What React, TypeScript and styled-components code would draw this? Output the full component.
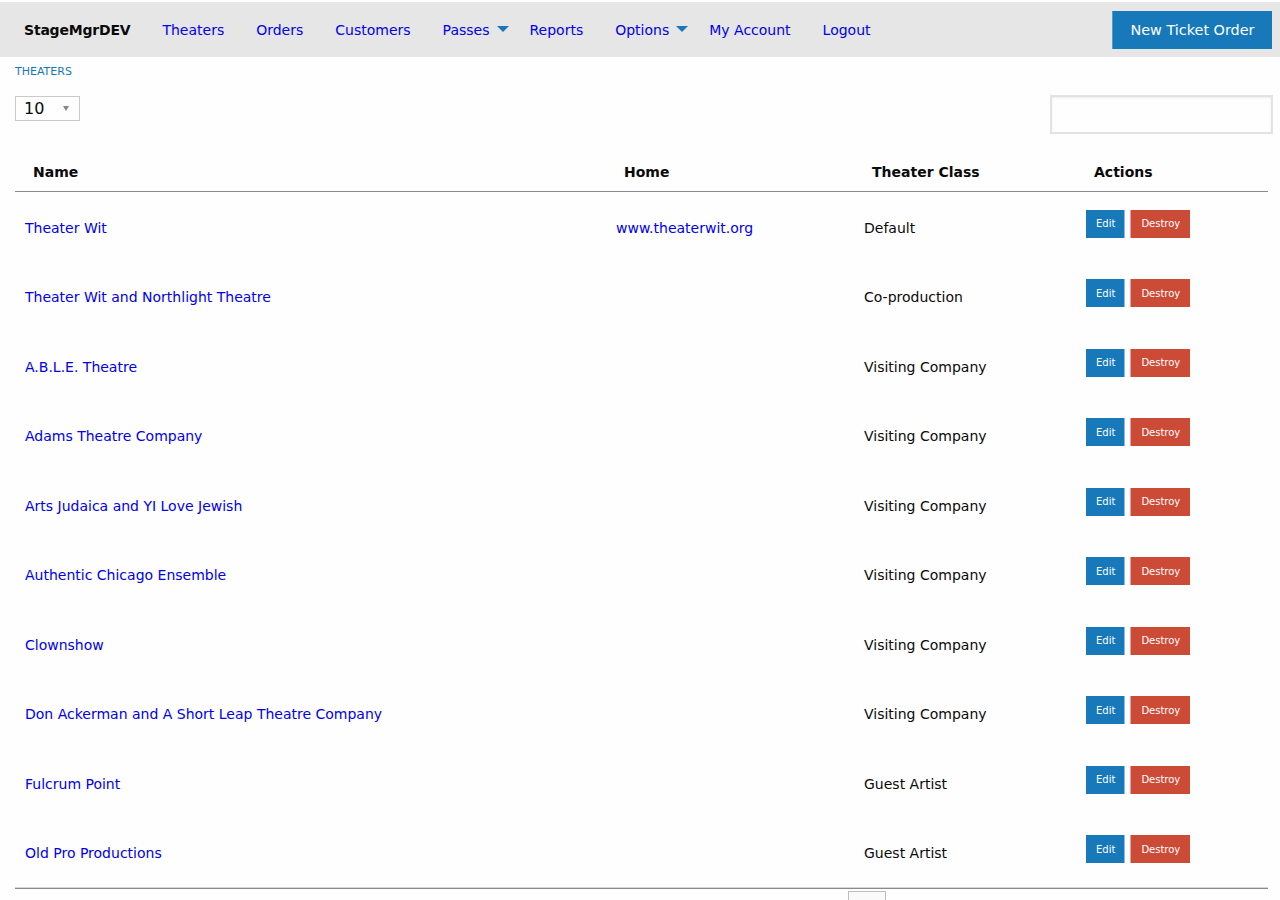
import React from 'react';
import styled, { createGlobalStyle } from 'styled-components';

const GlobalStyle = createGlobalStyle`
  html, body {
    margin: 0;
    padding: 0;
    background: #fefefe;
    font-family: "DejaVu Sans", Verdana, sans-serif;
    font-size: 14px;
    color: #0a0a0a;
  }
  * { box-sizing: border-box; }
`;

const theaters = [
  { name: 'Theater Wit', home: 'www.theaterwit.org', klass: 'Default' },
  { name: 'Theater Wit and Northlight Theatre', home: '', klass: 'Co-production' },
  { name: 'A.B.L.E. Theatre', home: '', klass: 'Visiting Company' },
  { name: 'Adams Theatre Company', home: '', klass: 'Visiting Company' },
  { name: 'Arts Judaica and YI Love Jewish', home: '', klass: 'Visiting Company' },
  { name: 'Authentic Chicago Ensemble', home: '', klass: 'Visiting Company' },
  { name: 'Clownshow', home: '', klass: 'Visiting Company' },
  { name: 'Don Ackerman and A Short Leap Theatre Company', home: '', klass: 'Visiting Company' },
  { name: 'Fulcrum Point', home: '', klass: 'Guest Artist' },
  { name: 'Old Pro Productions', home: '', klass: 'Guest Artist' },
];

const navItems = [
  { label: 'Theaters' },
  { label: 'Orders' },
  { label: 'Customers' },
  { label: 'Passes', dropdown: true },
  { label: 'Reports' },
  { label: 'Options', dropdown: true },
  { label: 'My Account' },
  { label: 'Logout' },
];

const App: React.FC = () => (
  <>
    <GlobalStyle />
    <SPage>
      <STopBar>
        <SMenu>
          <SBrand>StageMgrDEV</SBrand>
          {navItems.map((item) => (
            <SNavLink key={item.label} href="#" $dropdown={item.dropdown}>
              {item.label}
            </SNavLink>
          ))}
        </SMenu>
        <SPrimaryButton>New Ticket Order</SPrimaryButton>
      </STopBar>

      <SContent>
        <SBreadcrumb href="#">THEATERS</SBreadcrumb>

        <SControls>
          <SLengthSelect>
            <span>10</span>
            <SSelectArrow />
          </SLengthSelect>
          <SSearch type="text" />
        </SControls>

        <STable>
          <SHeadRow>
            <SHeadCell>Name</SHeadCell>
            <SHeadCell>Home</SHeadCell>
            <SHeadCell>Theater Class</SHeadCell>
            <SHeadCell>Actions</SHeadCell>
          </SHeadRow>
          {theaters.map((t) => (
            <SRow key={t.name}>
              <SCell><SLink href="#">{t.name}</SLink></SCell>
              <SCell>{t.home && <SLink href="#">{t.home}</SLink>}</SCell>
              <SCell>{t.klass}</SCell>
              <SCell>
                <SActions>
                  <STinyButton $variant="primary">Edit</STinyButton>
                  <STinyButton $variant="alert">Destroy</STinyButton>
                </SActions>
              </SCell>
            </SRow>
          ))}
        </STable>
        <SFooter>
          <SPagerBox />
        </SFooter>
      </SContent>
    </SPage>
  </>
);

const SPage = styled.div`
  padding-top: 2px;
`;

const STopBar = styled.div`
  display: flex;
  align-items: center;
  justify-content: space-between;
  height: 55px;
  padding: 8px;
  background-color: #e6e6e6;
`;

const SMenu = styled.nav`
  display: flex;
  align-items: center;
`;

const SBrand = styled.span`
  padding: 0 16px;
  font-weight: bold;
  font-size: 14px;
  letter-spacing: -0.2px;
  color: #0a0a0a;
`;

const SNavLink = styled.a<{ $dropdown?: boolean }>`
  position: relative;
  display: block;
  padding: 10px 16px;
  padding-right: ${(p) => (p.$dropdown ? '24px' : '16px')};
  font-size: 14px;
  line-height: 1;
  color: #0000ee;
  text-decoration: none;
  &::after {
    content: '';
    display: ${(p) => (p.$dropdown ? 'block' : 'none')};
    position: absolute;
    right: 5px;
    top: 50%;
    margin-top: -4px;
    border-style: solid;
    border-width: 6px 6px 0;
    border-color: #1779ba transparent transparent;
  }
`;

const SPrimaryButton = styled.button`
  height: 38px;
  padding: 0 17.5px;
  border: none;
  border-left: 1px solid #4f9ccf;
  background-color: #1779ba;
  color: #fefefe;
  font-family: "DejaVu Sans", Verdana, sans-serif;
  font-size: 14.4px;
  cursor: pointer;
`;

const SContent = styled.main`
  padding: 0 7px 0 15px;
`;

const SBreadcrumb = styled.a`
  display: block;
  margin-top: 8px;
  height: 14px;
  line-height: 14px;
  font-size: 11px;
  color: #1779ba;
  text-decoration: none;
`;

const SControls = styled.div`
  display: flex;
  justify-content: space-between;
  align-items: flex-start;
  margin-top: 16px;
  height: 39px;
`;

const SLengthSelect = styled.div`
  display: flex;
  align-items: center;
  justify-content: space-between;
  width: 65px;
  height: 25px;
  margin-top: 1px;
  padding: 0 10px 0 8px;
  border: 1px solid #cacaca;
  background: #fefefe;
  font-size: 16px;
  color: #0a0a0a;
`;

const SSelectArrow = styled.span`
  border-style: solid;
  border-width: 5px 3.5px 0;
  border-color: #888 transparent transparent;
`;

const SSearch = styled.input`
  width: 223px;
  height: 39px;
  border: 2px solid #e3e3e3;
  box-shadow: inset 0 1px 2px rgba(10, 10, 10, 0.08);
  background: #fefefe;
  outline: none;
`;

const STable = styled.div`
  display: grid;
  grid-template-columns: 591px 248px 222px 1fr;
  margin-top: 17px;
  margin-right: 5px;
`;

const SHeadRow = styled.div`
  display: contents;
`;

const SHeadCell = styled.div`
  display: flex;
  align-items: center;
  height: 41px;
  padding-left: 18px;
  padding-top: 1px;
  border-bottom: 1px solid #8a8a8a;
  font-weight: bold;
  font-size: 14px;
  color: #0a0a0a;
`;

const SRow = styled.div`
  display: contents;
`;

const SCell = styled.div`
  display: flex;
  align-items: center;
  height: 69.5px;
  padding-left: 10px;
  padding-top: 2px;
  font-size: 14px;
  color: #0a0a0a;
`;

const SLink = styled.a`
  color: #0000ee;
  text-decoration: none;
`;

const SActions = styled.div`
  display: flex;
  gap: 5px;
  margin-bottom: 8px;
`;

const STinyButton = styled.button<{ $variant: 'primary' | 'alert' }>`
  height: 28px;
  padding: ${(p) => (p.$variant === 'primary' ? '0 9px 0 10px' : '0 10px')};
  border: none;
  border-right: ${(p) => (p.$variant === 'primary' ? '1px solid #8bbde0' : 'none')};
  border-left: ${(p) => (p.$variant === 'alert' ? '1px solid #e8a398' : 'none')};
  background-color: ${(p) => (p.$variant === 'primary' ? '#1779ba' : '#cc4b37')};
  color: #fefefe;
  font-family: "DejaVu Sans", Verdana, sans-serif;
  font-size: 10px;
  cursor: pointer;
`;

const SFooter = styled.div`
  display: flex;
  margin-right: 5px;
  border-top: 1px solid #d6d6d6;
  padding-top: 3px;
  position: relative;
  &::before {
    content: '';
    position: absolute;
    left: 0;
    right: 0;
    top: 0;
    height: 1px;
    background: #8a8a8a;
  }
`;

const SPagerBox = styled.div`
  width: 38px;
  height: 30px;
  margin-left: 833px;
  border: 1px solid #bdbdbd;
  border-bottom: none;
  background: #fafafa;
`;

export default App;
